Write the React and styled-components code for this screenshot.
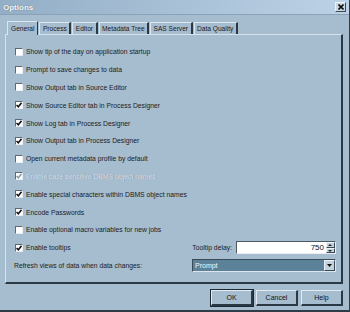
import React from 'react'
import styled, { createGlobalStyle } from 'styled-components'

const Global = createGlobalStyle`
  html, body { margin: 0; padding: 0; background: #a6bccf; }
  body { font-family: "Liberation Sans", Arial, sans-serif; }
`

const options = [
  { label: 'Show tip of the day on application startup', checked: false },
  { label: 'Prompt to save changes to data', checked: false },
  { label: 'Show Output tab in Source Editor', checked: false },
  { label: 'Show Source Editor tab in Process Designer', checked: true },
  { label: 'Show Log tab in Process Designer', checked: true },
  { label: 'Show Output tab in Process Designer', checked: true },
  { label: 'Open current metadata profile by default', checked: false },
  { label: 'Enable case sensitive DBMS object names', checked: true, disabled: true },
  { label: 'Enable special characters within DBMS object names', checked: true },
  { label: 'Encode Passwords', checked: true },
  { label: 'Enable optional macro variables for new jobs', checked: false },
]

const tabs = ['General', 'Process', 'Editor', 'Metadata Tree', 'SAS Server', 'Data Quality']

export default function App() {
  return (
    <>
      <Global />
      <Window>
        <TitleBar>
          <Title>Options</Title>
          <CloseButton>
            <svg width="6" height="6" viewBox="0 0 6 6">
              <path d="M0.5 0.5 L5.5 5.5 M5.5 0.5 L0.5 5.5" stroke="#111" strokeWidth="1.6" />
            </svg>
          </CloseButton>
        </TitleBar>
        <Body>
          <TabStrip>
            {tabs.map((t, i) => (
              <Tab key={t} $active={i === 0}>{t}</Tab>
            ))}
          </TabStrip>
          <Panel>
            {options.map((o) => (
              <Row key={o.label}>
                <CheckBox checked={o.checked} disabled={o.disabled} />
                <Label $disabled={o.disabled}>{o.label}</Label>
              </Row>
            ))}
            <Row>
              <CheckBox checked />
              <Label>Enable tooltips</Label>
              <Spacer />
              <FieldLabel>Tooltip delay:</FieldLabel>
              <SpinBox>
                <SpinValue>750</SpinValue>
                <SpinButtons>
                  <SpinArrow $up />
                  <SpinArrow />
                </SpinButtons>
              </SpinBox>
            </Row>
            <Row>
              <Label>Refresh views of data when data changes:</Label>
              <Spacer />
              <Select>
                <SelectValue>Prompt</SelectValue>
                <SelectButton>
                  <svg width="5" height="3" viewBox="0 0 5 3">
                    <path d="M0 0 H5 L2.5 3 Z" fill="#111" />
                  </svg>
                </SelectButton>
              </Select>
            </Row>
          </Panel>
          <Footer>
            <Button $default>OK</Button>
            <Button>Cancel</Button>
            <Button>Help</Button>
          </Footer>
        </Body>
      </Window>
    </>
  )
}

function CheckBox({ checked, disabled }) {
  return (
    <Box>
      {checked && (
        <svg width="6" height="6" viewBox="0 0 6 6">
          <path d="M0.5 3 L2.3 4.8 L5.5 0.8" fill="none" stroke={disabled ? '#8b9aa6' : '#111'} strokeWidth="1.5" />
        </svg>
      )}
    </Box>
  )
}

const Window = styled.div`
  width: 350px;
  height: 312px;
  box-sizing: border-box;
  background: #a6bccf;
  border-right: 1px solid #2e3d48;
  border-bottom: 2px solid #2e3d48;
  display: flex;
  flex-direction: column;
  overflow: hidden;
`

const TitleBar = styled.div`
  height: 14px;
  display: flex;
  align-items: center;
  justify-content: space-between;
  padding: 0 3px 0 3px;
  background: linear-gradient(to right, #93aec6, #bcd2e6);
  border-bottom: 1px solid #8aa2b7;
`

const Title = styled.span`
  font-size: 8px;
  font-weight: bold;
  color: #f4f8fb;
  text-shadow: 0 0 1px #4d6275;
`

const CloseButton = styled.div`
  width: 9px;
  height: 8px;
  display: flex;
  align-items: center;
  justify-content: center;
  background: #c9d7e3;
  border: 1px solid;
  border-color: #eef3f7 #3b4954 #3b4954 #eef3f7;
`

const Body = styled.div`
  flex: 1;
  display: flex;
  flex-direction: column;
  padding: 5px 6px 0 5px;
`

const TabStrip = styled.div`
  display: flex;
  align-items: flex-end;
  height: 14px;
  padding-left: 2px;
`

const Tab = styled.div`
  font-size: 6.6px;
  color: #1a1a1a;
  padding: 0 2.5px;
  height: ${(p) => (p.$active ? '14px' : '12px')};
  line-height: ${(p) => (p.$active ? '13px' : '12px')};
  border-top: 1px solid #dbe6ef;
  border-left: 1px solid #dbe6ef;
  border-right: 2px solid #2b3944;
  margin-right: 1px;
  box-sizing: border-box;
  white-space: nowrap;
  ${(p) => p.$active && `
    background: #a6bccf;
    margin-bottom: -1px;
    position: relative;
    z-index: 1;
    padding: 0 3px;
    border-right: 1px solid #2b3944;
  `}
`

const Panel = styled.div`
  height: 250px;
  box-sizing: border-box;
  border: 1px solid;
  border-color: #d6e2ec #2b3944 #2b3944 #d6e2ec;
  border-right-width: 2px;
  border-bottom-width: 2px;
  padding: 8px 5px 0 8px;
  display: flex;
  flex-direction: column;
`

const Row = styled.div`
  height: 17.8px;
  flex-shrink: 0;
  display: flex;
  align-items: center;
`

const Box = styled.div`
  width: 8px;
  height: 8px;
  box-sizing: border-box;
  background: #fff;
  border: 1px solid;
  border-color: #5d6a75 #e8eef3 #e8eef3 #5d6a75;
  display: flex;
  align-items: center;
  justify-content: center;
  margin-right: 3px;
  margin-left: 1px;
`

const Label = styled.span`
  font-size: 6.8px;
  color: ${(p) => (p.$disabled ? '#d2dde6' : '#1c1c1c')};
  text-shadow: ${(p) => (p.$disabled ? '1px 0 0 #8c9dab' : 'none')};
  white-space: nowrap;
`

const Spacer = styled.div`
  flex: 1;
`

const FieldLabel = styled.span`
  font-size: 6.8px;
  color: #1c1c1c;
  margin-right: 4px;
`

const SpinBox = styled.div`
  width: 100px;
  height: 13px;
  box-sizing: border-box;
  display: flex;
  background: #fff;
  border: 1px solid;
  border-color: #4c5963 #e8eef3 #e8eef3 #4c5963;
`

const SpinValue = styled.div`
  flex: 1;
  font-size: 8px;
  color: #111;
  text-align: right;
  line-height: 11px;
  padding-right: 2px;
`

const SpinButtons = styled.div`
  width: 9px;
  display: flex;
  flex-direction: column;
`

const SpinArrow = styled.div`
  flex: 1;
  background: #c3d2de;
  border: 1px solid;
  border-color: #eef3f7 #3b4954 #3b4954 #eef3f7;
  position: relative;
  &::after {
    content: '';
    position: absolute;
    left: 1px;
    top: 1px;
    border-left: 2px solid transparent;
    border-right: 2px solid transparent;
    ${(p) => (p.$up ? 'border-bottom: 2px solid #222;' : 'border-top: 2px solid #222;')}
  }
`

const Select = styled.div`
  width: 144px;
  height: 13px;
  box-sizing: border-box;
  display: flex;
  background: #5b8299;
  border: 1px solid;
  border-color: #3a4b57 #dce6ee #dce6ee #3a4b57;
`

const SelectValue = styled.div`
  flex: 1;
  font-size: 7px;
  color: #f1f5f8;
  line-height: 11px;
  padding-left: 2px;
`

const SelectButton = styled.div`
  width: 9px;
  display: flex;
  align-items: center;
  justify-content: center;
  background: #c3d2de;
  border: 1px solid;
  border-color: #eef3f7 #3b4954 #3b4954 #eef3f7;
`

const Footer = styled.div`
  display: flex;
  justify-content: flex-end;
  gap: 3px;
  padding-top: 6px;
  padding-right: 0;
`

const Button = styled.div`
  width: 42px;
  height: 16px;
  box-sizing: border-box;
  display: flex;
  align-items: center;
  justify-content: center;
  font-size: 7px;
  color: #161616;
  background: #a6bccf;
  border: 1px solid;
  border-color: #e2ebf2 #2b3944 #2b3944 #e2ebf2;
  border-right-width: 2px;
  border-bottom-width: 2px;
  ${(p) => p.$default && `
    outline: 1px solid #1e2a33;
  `}
`
